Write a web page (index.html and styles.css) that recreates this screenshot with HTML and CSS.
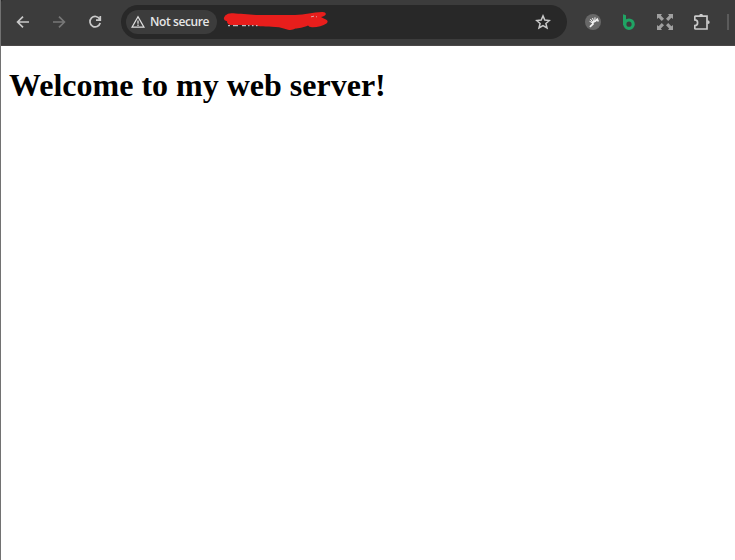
FILE: index.html
```html
<!DOCTYPE html>
<html lang="en">
<head>
<meta charset="utf-8">
<title>Welcome</title>
<link rel="stylesheet" href="styles.css">
</head>
<body>
<div class="window">
  <header class="toolbar">
    <nav class="nav">
      <svg class="icon" viewBox="0 0 16 16"><path d="M14 8H3M8 2.600 2.600 8 8 13.400"/></svg>
      <svg class="icon disabled" viewBox="0 0 16 16"><path d="M2 8h11M8 2.600 13.400 8 8 13.400"/></svg>
      <svg class="icon" viewBox="0 0 16 16"><path d="M12.700 5.100A5.200 5.200 0 1 0 13.200 9M13.300 2v4.200H9"/></svg>
    </nav>
    <div class="omnibox">
      <div class="chip">
        <svg class="warning" viewBox="0 0 14 14"><path d="M7 1.800 13 12.200H1z"/><path d="M7 5.400v3.400M7 9.600V11"/></svg>
        <span>Not secure</span>
      </div>
      <svg class="scribble" viewBox="0 0 106 20">
        <path class="ink" d="M5 1.800C8 .5 12 1.800 18 1.800L33 3H72C82 2.800 90 .3 99 0Q103-.2 102.800 2.300Q102.500 4 98 5Q100 6.500 103 7.400Q106 9 103.500 11.500C100 14 94 15.500 89 15.300Q86 15.200 85 13.500C81 15.500 75 16.500 72.500 16.600Q69 18.700 65 17.800Q61 16.500 56 15.200C46 14.500 38 14.800 33 13.500L23 13H8Q4 12.500 4 9.200Q1 8.800.8 6Q1.600 3 5 1.800Z"/>
        <path class="remnant" d="M5 13.700h2M10 13.700h5M19 13.700h4M25 13.700h1.500M29 13.700h1.500M33 13.700h1.500"/>
        <path class="gap" d="m88 4.800 3-.6M93 5l1-.5"/>
      </svg>
      <svg class="icon star" viewBox="0 0 16 16"><path d="m8 1.900 1.800 4.200 4.600.4-3.500 3 1.100 4.500L8 11.600 4 14l1.100-4.500-3.500-3 4.600-.4z"/></svg>
    </div>
    <div class="extensions">
      <svg class="icon hand" viewBox="0 0 16 16"><circle cx="8" cy="8" r="8"/><path d="M4.900 12.800 8 10 7.500 8.500 10.500 7 12.200 5.200 13.300 7.500" class="arm"/><path d="M8 9 4.500 7.300M8 8.500 5.300 5M8.800 7.800 7.500 4M9.800 7 10 3.300"/></svg>
      <svg class="icon letter" viewBox="0 0 16 16"><path d="M2 .3 5 1.300V11H2z"/><circle cx="8" cy="10.200" r="4.200"/></svg>
      <svg class="icon expand" viewBox="0 0 16 16"><path d="M0 0h5L3.800 1.600 7 4.800 4.800 7 1.600 3.800 0 5zM16 0v5l-1.600-1.200L11.200 7 9 4.800l3.200-3.200L11 0zM0 16v-5l1.600 1.200L4.800 9 7 11.200l-3.200 3.200L5 16zM16 16h-5l1.200-1.600L9 11.200 11.200 9l3.200 3.200L16 11z"/></svg>
      <svg class="icon puzzle" viewBox="0 0 16 16"><path d="M1.500 2.200H13V15H1.500Q.8 15 .8 14.300V11.600C2.800 11.600 3.600 10.200 3.600 8.700S2.800 5.800.8 5.800V2.900Q.8 2.200 1.500 2.200z"/><path class="tab" d="M5.200 2a1.900 2.200 0 0 1 3.800 0zM13.400 6.300a2.300 1.900 0 0 1 0 3.800z"/></svg>
      <span class="divider"></span>
    </div>
  </header>
  <main class="page">
    <h1>Welcome to my web server!</h1>
  </main>
</div>
</body>
</html>
```
FILE: styles.css
```css
* { box-sizing: border-box; }

body {
  margin: 0;
  background: #fff;
  overflow: hidden;
}

.window {
  height: 560px;
  border-left: 1px solid #727272;
}

.toolbar {
  display: flex;
  height: 46px;
  padding: 5px 0 6px 14px;
  background: radial-gradient(circle at 4px 4px, #3c3c3c 4px, #292929 5px) 0 0 / 4px 4px no-repeat, #3c3c3c;
  border-bottom: 1px solid #4b4848;
}

.icon {
  display: block;
  flex: none;
  width: 16px;
  height: 16px;
  fill: none;
  stroke: #c9c9c9;
  stroke-width: 1.7;
}

.nav {
  display: flex;
  align-items: center;
  gap: 20px;
  width: 106px;
}

.icon.disabled { stroke: #777; }

.omnibox {
  display: flex;
  align-items: center;
  width: 446px;
  height: 34px;
  padding: 0 16px 0 5px;
  border-radius: 17px;
  background: #282828;
}

.chip {
  display: flex;
  align-items: center;
  gap: 5px;
  width: 91px;
  height: 24px;
  padding-left: 5px;
  border-radius: 12px;
  background: #3c3c3c;
  color: #e6e6e6;
  font: 600 12px/24px "Open Sans", "Noto Sans", sans-serif;
  letter-spacing: -0.4px;
  white-space: nowrap;
}

.warning {
  flex: none;
  width: 14px;
  height: 14px;
  fill: none;
  stroke: #dedede;
  stroke-width: 1.3;
}

.scribble {
  width: 106px;
  height: 20px;
  margin-left: 6px;
  overflow: visible;
}

.ink { fill: #e81e1c; }
.remnant { fill: none; stroke: #d9e3e8; stroke-width: 1; }
.gap { fill: none; stroke: #d9c5c3; stroke-width: .8; }

.star {
  margin-left: auto;
  stroke-width: 1.5;
}

.extensions {
  display: flex;
  align-items: center;
  gap: 20px;
  padding-left: 18px;
}

.hand circle { fill: #686868; stroke: none; }
.hand path { stroke: #f2f2f2; stroke-width: 1; }
.hand .arm { stroke-width: 1.7; }
.letter path { fill: #20a464; stroke: none; }
.letter circle { stroke: #20a464; stroke-width: 3.2; }
.expand { fill: #a0a0a0; stroke: none; }
.puzzle { margin-left: 1px; }
.puzzle .tab { fill: #c9c9c9; stroke: none; }

.divider {
  width: 2px;
  height: 16px;
  margin-left: -3px;
  background: #5b5b5b;
}

.page { padding: 21px 8px 0; }

h1 {
  margin: 0;
  color: #000;
  font: bold 32px/37px "Liberation Serif", serif;
}
```
